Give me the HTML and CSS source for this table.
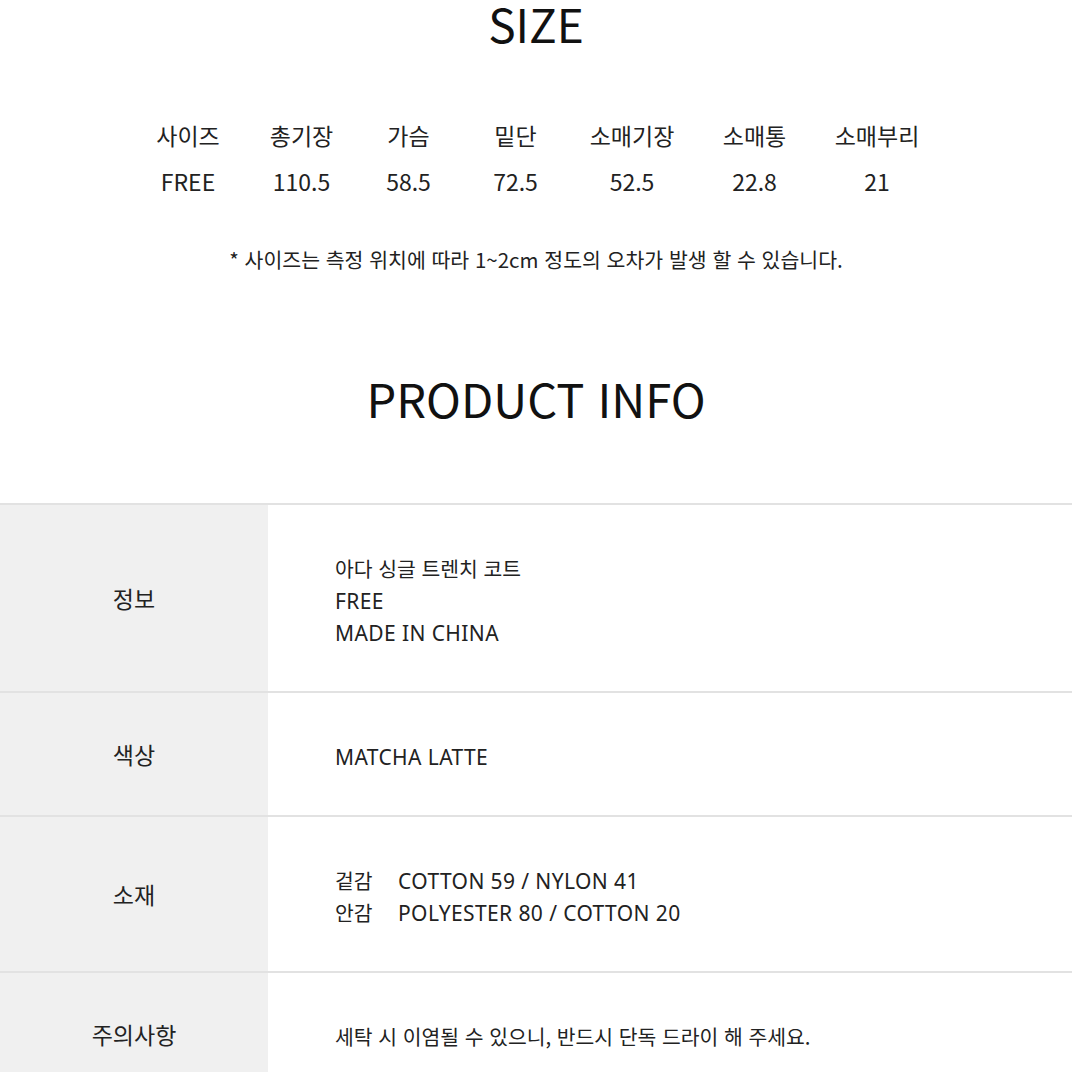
FILE: index.html
```html
<!DOCTYPE html>
<html lang="ko">
<head>
  <meta charset="UTF-8">
  <meta name="viewport" content="width=device-width, initial-scale=1.0">
  <title>SIZE / PRODUCT INFO</title>
  <link rel="stylesheet" href="styles.css">
</head>
<body>

  <section class="size">
    <h2 class="title size-title">SIZE</h2>

    <div class="size-table">
      <div class="size-row size-head">
        <span>사이즈</span>
        <span>총기장</span>
        <span>가슴</span>
        <span>밑단</span>
        <span>소매기장</span>
        <span>소매통</span>
        <span>소매부리</span>
      </div>
      <div class="size-row size-values">
        <span>FREE</span>
        <span>110.5</span>
        <span>58.5</span>
        <span>72.5</span>
        <span>52.5</span>
        <span>22.8</span>
        <span>21</span>
      </div>
    </div>

    <p class="note">* 사이즈는 측정 위치에 따라 1~2cm 정도의 오차가 발생 할 수 있습니다.</p>
  </section>

  <section class="info">
    <h2 class="title info-title">PRODUCT INFO</h2>

    <div class="info-table">
      <div class="info-row">
        <div class="info-label">정보</div>
        <div class="info-value">
          <div>아다 싱글 트렌치 코트</div>
          <div><span class="en">FREE</span></div>
          <div><span class="en">MADE IN CHINA</span></div>
        </div>
      </div>
      <div class="info-row">
        <div class="info-label">색상</div>
        <div class="info-value">
          <div><span class="en">MATCHA LATTE</span></div>
        </div>
      </div>
      <div class="info-row">
        <div class="info-label">소재</div>
        <div class="info-value">
          <div><span class="fabric-name">겉감</span><span class="en">COTTON 59 / NYLON 41</span></div>
          <div><span class="fabric-name">안감</span><span class="en">POLYESTER 80 / COTTON 20</span></div>
        </div>
      </div>
      <div class="info-row">
        <div class="info-label">주의사항</div>
        <div class="info-value">
          <div>세탁 시 이염될 수 있으니, 반드시 단독 드라이 해 주세요.</div>
        </div>
      </div>
    </div>
  </section>

</body>
</html>
```

FILE: styles.css
```css
body {
  font-family: "Noto Sans CJK KR", "Noto Sans", sans-serif;
  background-color: white;
  color: #222;
  margin: 0;
  padding: 0;
}

.title {
  margin: 0;
  text-align: center;
  font-weight: 400;
  color: #111;
}

.size-title {
  font-size: 46px;
  line-height: 46px;
}

.size-table {
  margin-top: 73px;
  font-size: 23px;
}

.size-row {
  display: grid;
  grid-template-columns: 116px 111px 103px 111px 122px 123px 122px;
  padding-left: 130px;
  line-height: 32px;
}

.size-row span {
  text-align: center;
}

.size-values {
  margin-top: 14px;
}

.note {
  margin: 47px 0 0;
  text-align: center;
  font-size: 20.5px;
  line-height: 30px;
}

.info-title {
  margin-top: 96px;
  font-size: 47px;
  line-height: 56px;
}

.info-table {
  margin-top: 77px;
  border-top: 2px solid #e2e2e2;
}

.info-row {
  display: flex;
  border-bottom: 2px solid #e2e2e2;
}

.info-row:last-child {
  border-bottom: none;
}

.info-label {
  width: 268px;
  flex-shrink: 0;
  background-color: #f0f0f0;
  display: flex;
  align-items: center;
  justify-content: center;
  font-size: 23px;
}

.info-value {
  padding: 47px 0 43px 67px;
  font-size: 20.4px;
  line-height: 32px;
}

.en {
  font-family: "Noto Sans", "Noto Sans CJK KR", sans-serif;
  font-size: 21px;
  line-height: 20px;
  letter-spacing: 0.4px;
}

.fabric-name {
  display: inline-block;
  width: 63px;
}
```
